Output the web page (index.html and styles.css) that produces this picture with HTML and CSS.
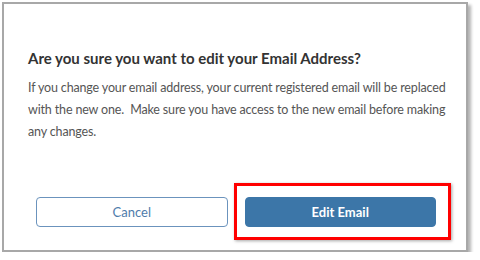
FILE: index.html
```html
<!DOCTYPE html>
<html lang="en">
<head>
    <meta charset="UTF-8">
    <meta name="viewport" content="width=device-width, initial-scale=1.0">
    <title>Edit Email</title>
    <link rel="stylesheet" href="styles.css">
</head>
<body>
    <div class="modal">
        <div class="modal-body">
            <h2 class="modal-title">Are you sure you want to edit your Email Address?</h2>
            <p class="modal-text">If you change your email address, your current registered email will be replaced with the new one.&nbsp; Make sure you have access to the new email before making any changes.</p>
        </div>
        <div class="modal-footer">
            <button class="btn btn-outline">Cancel</button>
            <button class="btn btn-primary">Edit Email</button>
        </div>
    </div>
    <div class="highlight"></div>
</body>
</html>
```

FILE: styles.css
```css
body {
    font-family: 'Lato', 'Noto Sans', sans-serif;
    background-color: #fff;
    margin: 0;
    padding: 2px 0 0 2px;
}

.modal {
    width: 462px;
    height: 246px;
    border: 2px solid #a8a8a8;
    background-color: #fff;
    box-shadow: 3px 3px 3px rgba(0, 0, 0, 0.3);
    display: flex;
    flex-direction: column;
}

.modal-body {
    padding: 44px 6px 0 24px;
}

.modal-title {
    margin: 0;
    font-size: 15px;
    font-weight: bold;
    color: #333;
    line-height: 20px;
}

.modal-text {
    margin: 9px 0 0;
    font-size: 12.5px;
    letter-spacing: -0.15px;
    line-height: 22px;
    color: #555;
}

.modal-footer {
    margin-top: auto;
    display: flex;
    gap: 17px;
    padding: 0 30px 23px 32px;
}

.btn {
    flex: 1;
    height: 30px;
    border-radius: 4px;
    font-family: inherit;
    font-size: 13px;
    cursor: pointer;
}

.btn-outline {
    background-color: #fff;
    border: 1px solid #6b93bd;
    color: #4f7cab;
}

.btn-primary {
    background-color: #3c76a8;
    border: 1px solid #3c76a8;
    color: #fff;
    font-weight: bold;
}

.highlight {
    position: absolute;
    left: 234px;
    top: 183px;
    width: 211px;
    height: 51px;
    border: 3px solid #f00;
    box-shadow: 1px 1px 3px rgba(0, 0, 0, 0.35);
}
```
